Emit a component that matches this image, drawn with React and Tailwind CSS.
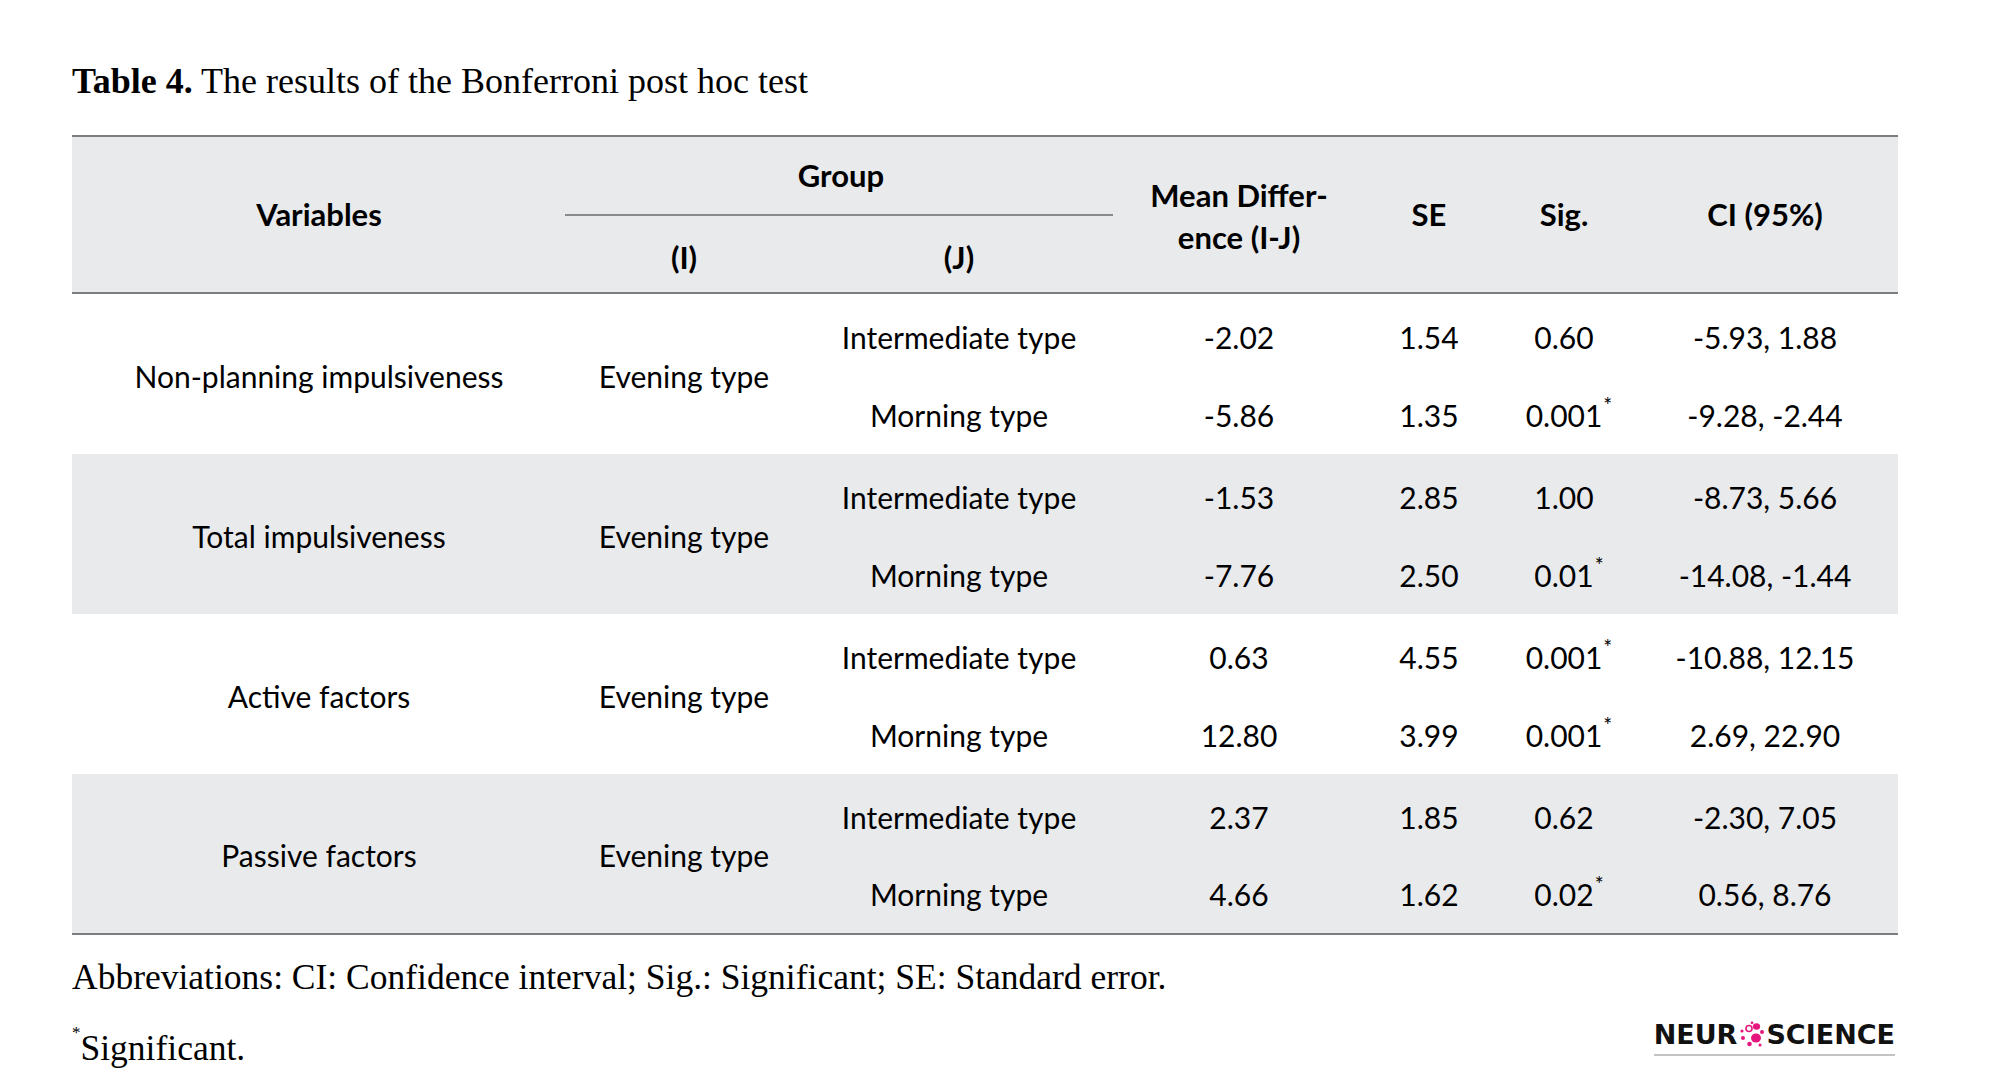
import React from "react";

const groups = [
  {
    v: "Non-planning impulsiveness",
    bg: "bg-white",
    rows: [
      ["Intermediate type", "-2.02", "1.54", "0.60", false, "-5.93, 1.88"],
      ["Morning type", "-5.86", "1.35", "0.001", true, "-9.28, -2.44"],
    ],
  },
  {
    v: "Total impulsiveness",
    bg: "bg-[#e9eaec]",
    rows: [
      ["Intermediate type", "-1.53", "2.85", "1.00", false, "-8.73, 5.66"],
      ["Morning type", "-7.76", "2.50", "0.01", true, "-14.08, -1.44"],
    ],
  },
  {
    v: "Active factors",
    bg: "bg-white",
    rows: [
      ["Intermediate type", "0.63", "4.55", "0.001", true, "-10.88, 12.15"],
      ["Morning type", "12.80", "3.99", "0.001", true, "2.69, 22.90"],
    ],
  },
  {
    v: "Passive factors",
    bg: "bg-[#e9eaec]",
    rows: [
      ["Intermediate type", "2.37", "1.85", "0.62", false, "-2.30, 7.05"],
      ["Morning type", "4.66", "1.62", "0.02", true, "0.56, 8.76"],
    ],
  },
];

function Sig({ value, star }) {
  return (
    <span className="relative">
      {value}
      {star && (
        <span className="absolute left-full top-[1px] ml-[1px] text-[21px] leading-none">*</span>
      )}
    </span>
  );
}

function Logo() {
  return (
    <div className="flex flex-col items-stretch">
      <div
        className="flex items-center text-[27px] font-bold leading-none text-[#111]"
        style={{ fontFamily: '"DejaVu Sans", sans-serif' }}
      >
        <span>NEUR</span>
        <svg width="27" height="27" viewBox="0 0 27 27" className="mx-[1px]">
          <circle cx="11" cy="7.5" r="3" fill="none" stroke="#e5177e" strokeWidth="1.6" />
          <ellipse cx="18.5" cy="5.5" rx="3.6" ry="3.2" fill="#e5177e" />
          <ellipse cx="18" cy="17" rx="5" ry="4.6" fill="#e5177e" />
          <circle cx="24" cy="11" r="2" fill="#e5177e" />
          <circle cx="11.5" cy="23" r="2.3" fill="#e5177e" />
          <circle cx="5" cy="17" r="2" fill="#e5177e" />
          <circle cx="4" cy="10" r="1.6" fill="#e5177e" />
          <circle cx="14" cy="1.8" r="1.4" fill="#e5177e" />
          <circle cx="22" cy="24" r="1.5" fill="#e5177e" />
        </svg>
        <span>SCIENCE</span>
      </div>
      <div className="mt-[6px] h-[2px] bg-[#c4c4c4]" />
    </div>
  );
}

export default function App() {
  const sans = { fontFamily: 'Lato, "Open Sans", sans-serif' };
  const serif = { fontFamily: '"Liberation Serif", "DejaVu Serif", serif' };
  return (
    <div className="w-[2000px] h-[1089px] bg-white text-black overflow-hidden">
      <div className="pl-[72px] pt-[60px] w-[1898px]">
        <div className="text-[36px] leading-[42px] h-[75px]" style={serif}>
          <span className="font-bold">Table 4.</span> The results of the Bonferroni post hoc test
        </div>

        <div className="w-[1826px]" style={sans}>
          {/* header */}
          <div className="border-t-[2px] border-b-[2px] border-[#7d7d7d] bg-[#e9eaec] h-[159px] flex text-[31px] font-bold">
            <div className="w-[494px] flex items-center justify-center">Variables</div>
            <div className="w-[550px] flex flex-col">
              <div className="h-[77px] flex items-center justify-center">Group</div>
              <div className="h-[2px] bg-[#8a8a8a] mr-[3px] -ml-[1px]" />
              <div className="flex-1 flex pt-[6px]">
                <div className="w-[236px] flex items-center justify-center">(I)</div>
                <div className="w-[314px] flex items-center justify-center">(J)</div>
              </div>
            </div>
            <div className="w-[246px] flex flex-col items-center justify-center leading-[42px] pt-[2px]">
              <div>Mean Differ-</div>
              <div>ence (I-J)</div>
            </div>
            <div className="w-[134px] flex items-center justify-center">SE</div>
            <div className="w-[136px] flex items-center justify-center">Sig.</div>
            <div className="w-[266px] flex items-center justify-center">CI (95%)</div>
          </div>

          {groups.map((g, gi) => (
            <div
              key={gi}
              className={`${g.bg} flex text-[30px] ${gi === 3 ? "border-b-[2px] border-[#7d7d7d] h-[161px]" : "h-[160px]"}`}
            >
              <div className="w-[494px] flex items-center justify-center pt-[4px]">{g.v}</div>
              <div className="w-[236px] flex items-center justify-center pt-[4px]">Evening type</div>
              <div className="flex flex-col pt-[5px]">
                {g.rows.map((r, ri) => (
                  <div key={ri} className="flex h-[78px]">
                    <div className="w-[314px] flex items-center justify-center">{r[0]}</div>
                    <div className="w-[246px] flex items-center justify-center">{r[1]}</div>
                    <div className="w-[134px] flex items-center justify-center">{r[2]}</div>
                    <div className="w-[136px] flex items-center justify-center">
                      <Sig value={r[3]} star={r[4]} />
                    </div>
                    <div className="w-[266px] flex items-center justify-center">{r[5]}</div>
                  </div>
                ))}
              </div>
            </div>
          ))}
        </div>

        <div className="flex justify-between items-end w-[1826px]" style={serif}>
          <div>
            <div className="text-[35.5px] leading-[42px] mt-[21px]">
              Abbreviations: CI: Confidence interval; Sig.: Significant; SE: Standard error.
            </div>
            <div className="text-[35.5px] leading-[42px] mt-[29px]">
              <sup className="text-[17px] align-top relative top-[6px]">*</sup>Significant.
            </div>
          </div>
          <div className="mb-[13px] mr-[3px]">
            <Logo />
          </div>
        </div>
      </div>
    </div>
  );
}
